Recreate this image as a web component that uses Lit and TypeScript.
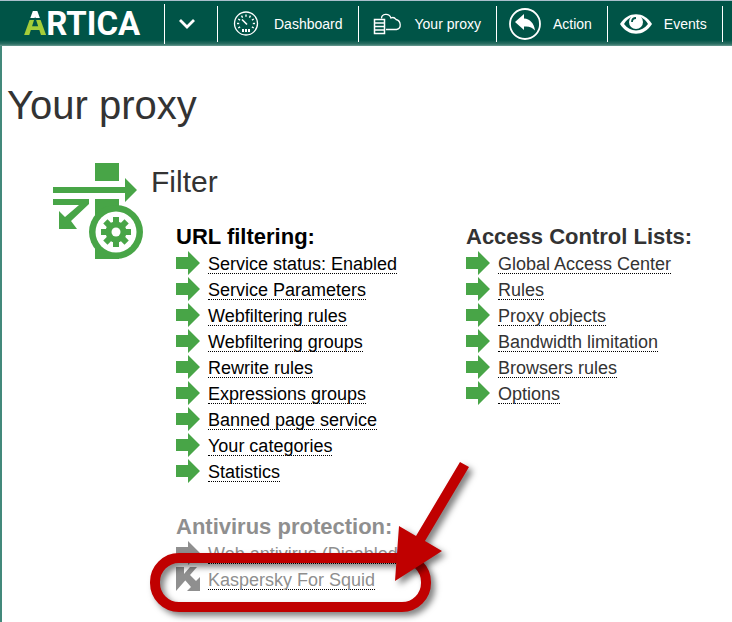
import { LitElement, html, css, svg, nothing } from "lit";
import { customElement, property } from "lit/decorators.js";

type IconName = "dashboard" | "proxy" | "action" | "events";

interface Entry {
  label: string;
  icon?: "kaspersky";
}

const NAV: { label: string; icon: IconName }[] = [
  { label: "Dashboard", icon: "dashboard" },
  { label: "Your proxy", icon: "proxy" },
  { label: "Action", icon: "action" },
  { label: "Events", icon: "events" },
];

const URL_FILTERING: Entry[] = [
  "Service status: Enabled",
  "Service Parameters",
  "Webfiltering rules",
  "Webfiltering groups",
  "Rewrite rules",
  "Expressions groups",
  "Banned page service",
  "Your categories",
  "Statistics",
].map((label) => ({ label }));

const ACCESS_LISTS: Entry[] = [
  "Global Access Center",
  "Rules",
  "Proxy objects",
  "Bandwidth limitation",
  "Browsers rules",
  "Options",
].map((label) => ({ label }));

const ANTIVIRUS: Entry[] = [
  { label: "Web antivirus (Disabled)" },
  { label: "Kaspersky For Squid", icon: "kaspersky" },
];

const spokes = (count: number) =>
  Array.from({ length: count }, (_, i) => (i * 360) / count);

const NAV_ICONS = {
  dashboard: svg`
    <circle cx="16" cy="15.500" r="11.500" fill="none" stroke="#fff" stroke-width="1.300"/>
    <g stroke="#fff" stroke-width="1.400">
      ${[-120, -90, -60, -30, 0, 30, 60, 90, 120].map(
        (a) => svg`<path d="M16 6.500v2.200" transform="rotate(${a} 16 15.500)"/>`
      )}
      <path d="M12 11.500l5 5" stroke-width="1.600"/>
    </g>
    <path d="M12 21h2v3h-2zM15 21h2v3h-2zM18 21h2v3h-2z" fill="#fff"/>`,
  proxy: svg`
    <path d="M10.500 10.500C10.500 5.500 18 4.500 20 10C22 9 24 10 25 11.500C30 12.500 31 20.500 25.500 21.500H15"
      fill="none" stroke="#fff" stroke-width="1.300"/>
    <path d="M3.500 11.500h10v14h-10zM3 15h11M3 18.500h11M3 22h11" fill="none" stroke="#fff" stroke-width="1.500"/>`,
  action: svg`
    <circle cx="16" cy="16" r="15" fill="none" stroke="#fff" stroke-width="1.800"/>
    <path d="M6 14L15 6V10.500C21 11 25 15 26 22.500C23 19 20 18 15 18.500V22Z" fill="#fff"/>`,
  events: svg`
    <path fill="#fff" d="M0 16C8 3 24 3 32 16C24 29 8 29 0 16Z"/>
    <path fill="#005447" d="M4 16C6 12.500 8 11 10.500 9.500H21.500C24 11 26 12.500 28 16C22 24.500 10 24.500 4 16Z"/>
    <circle cx="16" cy="14" r="7" fill="#fff"/>
    <path d="M12 14C12 11.500 13.500 10 16 10" fill="none" stroke="#005447" stroke-width="1.800"/>`,
};

@customElement("top-bar")
export class TopBar extends LitElement {
  static styles = css`
    :host {
      display: block;
    }
    .bar {
      display: flex;
      align-items: center;
      box-sizing: border-box;
      height: 46px;
      border-top: 1px solid #a9bfcc;
      background: linear-gradient(#005447 39px, #2d7065 43px, #6b9c93 45px);
    }
    .brand {
      box-sizing: border-box;
      width: 164px;
      padding-left: 24px;
      font: 700 33px/40px Roboto, "Liberation Sans", sans-serif;
      color: #fff;
      text-decoration: none;
    }
    .first {
      color: transparent;
      background: linear-gradient(#fff 14px, transparent 14px, transparent 16px, #a5cd39 16px);
      background-clip: text;
      -webkit-background-clip: text;
    }
    .toggle {
      display: flex;
      align-items: center;
      justify-content: center;
      width: 53px;
      height: 40px;
      padding: 0 8px 0 0;
      border: 0;
      border-left: 1px solid #fff;
      background: none;
    }
    .items {
      display: flex;
      margin: 0;
      padding: 0;
      list-style: none;
    }
    .item {
      height: 36px;
      border-left: 1px solid #fff;
    }
    .item:last-child {
      border-right: 1px solid #fff;
    }
    .link {
      display: flex;
      align-items: center;
      gap: 12px;
      height: 36px;
      padding: 0 15px 0 12px;
      font: 14px/20px "Liberation Sans", Arial, sans-serif;
      color: #fff;
      text-decoration: none;
      white-space: nowrap;
    }
  `;

  render() {
    return html`
      <header class="bar">
        <a class="brand" href="#" aria-label="Artica"><span class="first">A</span>RTICA</a>
        <button class="toggle" aria-label="Open menu">
          <svg width="16" height="10" viewBox="0 0 16 10">
            <path d="M1 1L8 8L15 1" fill="none" stroke="#fff" stroke-width="2.800"/>
          </svg>
        </button>
        <nav>
          <ul class="items">
            ${NAV.map(
              (n) => html`<li class="item">
                <a class="link" href="#">
                  <svg width="32" height="32" viewBox="0 0 32 32">${NAV_ICONS[n.icon]}</svg>
                  ${n.label}
                </a>
              </li>`
            )}
          </ul>
        </nav>
      </header>
    `;
  }
}

@customElement("link-group")
export class LinkGroup extends LitElement {
  @property() heading = "";
  @property() tone: "strong" | "normal" | "muted" = "normal";
  @property({ attribute: false }) entries: Entry[] = [];

  static styles = css`
    :host {
      display: block;
    }
    .group {
      color: #333;
      --arrow: #48a547;
    }
    .strong {
      color: #000;
    }
    .muted {
      color: #8f8f8f;
      --arrow: #8f8f8f;
    }
    .heading {
      margin: 0;
      font-size: 22px;
      line-height: 28px;
      font-weight: 700;
    }
    .list {
      margin: 0;
      padding: 0;
      list-style: none;
    }
    .row {
      position: relative;
      display: flex;
      align-items: flex-start;
      gap: 8px;
      height: 26px;
      font-size: 18px;
      line-height: 26px;
      white-space: nowrap;
    }
    .link {
      color: inherit;
      text-decoration: none;
      border-bottom: 1px dotted #000;
      line-height: 22px;
      margin-top: 2px;
      height: 20px;
    }
    .mark {
      fill: var(--arrow);
    }
    .callout {
      position: absolute;
      left: -36px;
      top: -117px;
      pointer-events: none;
      filter: drop-shadow(4px 4px 3px rgba(0, 0, 0, 0.5));
    }
  `;

  private mark(entry: Entry) {
    return html`<svg class="mark" width="24" height="24" viewBox="0 0 24 24">
      ${entry.icon === "kaspersky"
        ? svg`<path d="M0 0H8V7L14 0H21L0 24ZM9 13L14 8L20 14L24 10V24H11L15 20Z"/>`
        : svg`<path d="M0 6H12V0L24 12L12 24V18H0Z"/>`}
    </svg>`;
  }

  private callout() {
    return html`
      <svg class="callout" width="340" height="180" viewBox="140 450 340 180">
        <rect x="155" y="558" width="271" height="49" rx="24" fill="none" stroke="#c00000" stroke-width="10"/>
      </svg>
      <svg class="callout" width="340" height="180" viewBox="140 450 340 180">
        <path d="M460 462L469 467L425 541L442 551L395 581L399 526L416 536Z" fill="#c00000"/>
      </svg>
    `;
  }

  render() {
    return html`
      <section class="group ${this.tone}">
        <h3 class="heading">${this.heading}</h3>
        <ul class="list">
          ${this.entries.map(
            (e) => html`<li class="row">
              ${this.mark(e)}<a class="link" href="#">${e.label}</a>
              ${e.icon === "kaspersky" ? this.callout() : nothing}
            </li>`
          )}
        </ul>
      </section>
    `;
  }
}

@customElement("app-root")
export class AppRoot extends LitElement {
  static styles = css`
    :host {
      display: flex;
      flex-direction: column;
      min-height: 100vh;
      background: #fff;
      font-family: "Liberation Sans", Arial, sans-serif;
      color: #333;
    }
    .page {
      flex: 1;
      padding: 36px 0 0 5px;
      border-left: 2px solid #43897b;
    }
    .title {
      margin: 0 0 35px;
      font-size: 40px;
      line-height: 46px;
      font-weight: 400;
    }
    .section {
      display: flex;
      gap: 8px;
      padding-left: 46px;
    }
    .emblem {
      flex: none;
      fill: #48a547;
    }
    .body {
      flex: 1;
    }
    .name {
      margin: 0 0 22px;
      font-size: 30px;
      line-height: 38px;
      font-weight: 400;
    }
    .columns {
      display: grid;
      grid-template-columns: 290px 1fr;
      padding-left: 25px;
    }
    .stack {
      display: flex;
      flex-direction: column;
      gap: 28px;
    }
  `;

  render() {
    return html`
      <top-bar></top-bar>
      <main class="page">
        <h1 class="title">Your proxy</h1>
        <section class="section">
          <svg class="emblem" width="90" height="96" viewBox="0 0 90 96">
            <path d="M42 0H66V18H42ZM0 24H72V15L84 27L72 39V30H0ZM0 36H36V41L18 58L24 66H6V48L12 54L26 42H0ZM42 36H66V96H42Z"/>
            <circle cx="63" cy="69" r="27"/>
            <circle cx="63" cy="69" r="20.500" fill="#fff"/>
            <circle cx="63" cy="69" r="10.500"/>
            ${spokes(8).map(
              (a) => svg`<path d="M60 54h6v8h-6z" transform="rotate(${a} 63 69)"/>`
            )}
            <circle cx="63" cy="69" r="4.500" fill="#fff"/>
          </svg>
          <div class="body">
            <h2 class="name">Filter</h2>
            <div class="columns">
              <div class="stack">
                <link-group heading="URL filtering:" tone="strong" .entries=${URL_FILTERING}></link-group>
                <link-group heading="Antivirus protection:" tone="muted" .entries=${ANTIVIRUS}></link-group>
              </div>
              <link-group heading="Access Control Lists:" .entries=${ACCESS_LISTS}></link-group>
            </div>
          </div>
        </section>
      </main>
    `;
  }
}
